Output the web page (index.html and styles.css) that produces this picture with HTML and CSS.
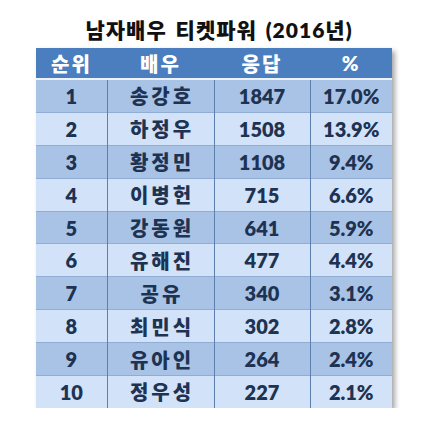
FILE: index.html
```html
<!DOCTYPE html>
<html lang="ko">
<head>
    <meta charset="UTF-8">
    <title>남자배우 티켓파워 (2016년)</title>
    <link rel="stylesheet" href="styles.css">
</head>
<body>
    <div class="wrap">
        <h1 class="title">남자배우 티켓파워 (2016년)</h1>
        <table class="rank">
            <thead>
                <tr>
                    <th class="c-rank">순위</th>
                    <th class="c-name">배우</th>
                    <th class="c-vote">응답</th>
                    <th class="c-pct">%</th>
                </tr>
            </thead>
            <tbody>
                <tr><td>1</td><td class="name">송강호</td><td>1847</td><td>17.0%</td></tr>
                <tr><td>2</td><td class="name">하정우</td><td>1508</td><td>13.9%</td></tr>
                <tr><td>3</td><td class="name">황정민</td><td>1108</td><td>9.4%</td></tr>
                <tr><td>4</td><td class="name">이병헌</td><td>715</td><td>6.6%</td></tr>
                <tr><td>5</td><td class="name">강동원</td><td>641</td><td>5.9%</td></tr>
                <tr><td>6</td><td class="name">유해진</td><td>477</td><td>4.4%</td></tr>
                <tr><td>7</td><td class="name">공유</td><td>340</td><td>3.1%</td></tr>
                <tr><td>8</td><td class="name">최민식</td><td>302</td><td>2.8%</td></tr>
                <tr><td>9</td><td class="name">유아인</td><td>264</td><td>2.4%</td></tr>
                <tr><td>10</td><td class="name">정우성</td><td>227</td><td>2.1%</td></tr>
            </tbody>
        </table>
    </div>
</body>
</html>
```

FILE: styles.css
```css
body {
    margin: 0;
    background-color: #fff;
    font-family: Lato, "Noto Sans CJK KR", sans-serif;
}

.wrap {
    padding: 17px 0 0 36px;
    width: 356px;
}

.title {
    margin: 0 0 6px 0;
    padding-left: 10px;
    text-align: center;
    font-size: 21px;
    line-height: 25px;
    font-weight: 800;
    letter-spacing: 1px;
    word-spacing: 3px;
    color: #111;
}

.rank {
    width: 356px;
    border-collapse: collapse;
    box-shadow: 3px 3px 5px rgba(0,0,0,0.35);
    color: #1e3352;
    font-size: 20px;
    font-weight: 800;
}

.rank th {
    background-color: #4a7ebe;
    color: #fff;
    height: 30px;
    padding: 0;
    border-bottom: 2px solid #eef3fb;
    font-weight: 800;
    letter-spacing: 2px;
}

.c-rank { width: 71px; }
.c-name { width: 107px; }
.c-vote { width: 96px; }
.c-pct { width: 82px; }

.rank td {
    height: 31.9px;
    padding: 0;
    text-align: center;
    border-left: 1px solid #5e80ae;
    border-top: 1px solid #92add3;
}

.rank td.name {
    letter-spacing: 3px;
    padding-left: 3px;
}

.rank td:first-child {
    border-left: none;
}

.rank tbody tr:nth-child(odd) td {
    background-color: #a9c3e7;
}

.rank tbody tr:nth-child(even) td {
    background-color: #d2e2f8;
}
```
